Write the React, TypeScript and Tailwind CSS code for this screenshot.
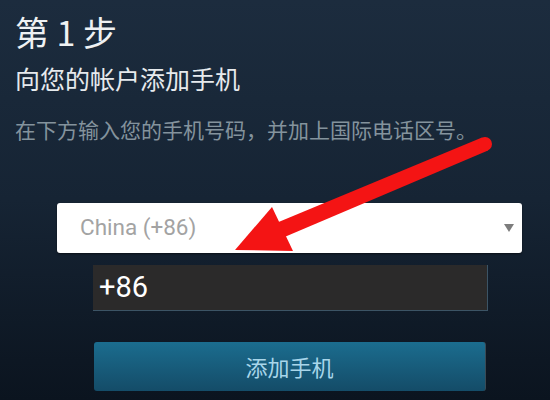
export default function App() {
  return (
    <div className="relative w-[550px] h-[400px] overflow-hidden bg-gradient-to-b from-[#1c2c3e] via-[#162434] to-[#0b141f] font-['Roboto','Noto_Sans_CJK_SC',sans-serif]">
      <div className="flex flex-col pl-[15px] pt-[12px]">
        <h1 className="text-[34px] leading-[40px] text-[#eef1f3] font-['Noto_Sans_CJK_SC',sans-serif]">
          第 1 步
        </h1>
        <h2 className="mt-[11px] text-[25px] leading-[30px] text-[#e6eaed] font-['Noto_Sans_CJK_SC',sans-serif]">
          向您的帐户添加手机
        </h2>
        <p className="mt-[23px] text-[21px] leading-[26px] text-[#84939d] font-['Noto_Sans_CJK_SC',sans-serif]">
          在下方输入您的手机号码，并加上国际电话区号。
        </p>

        <div className="mt-[61px] ml-[42px] flex h-[50px] w-[465px] items-center justify-between rounded-[3px] bg-white pl-[23px] pr-[8px] shadow-[0_1px_2px_rgba(0,0,0,0.5)]">
          <span className="text-[22.5px] text-[#a3a3a3]">China (+86)</span>
          <svg width="10" height="8" viewBox="0 0 10 8">
            <path d="M0 0 L10 0 L5 8 Z" fill="#7d7d7d" />
          </svg>
        </div>

        <div className="mt-[12px] ml-[78px] flex h-[46px] w-[395px] items-center border-r border-b border-[#3c5465] bg-[#2b2a2a] pl-[6px]">
          <span className="text-[29px] text-white">+86</span>
        </div>

        <button className="mt-[31px] ml-[79px] flex h-[49px] w-[392px] items-center justify-center rounded-[3px] border-r border-[#3a4a55] bg-gradient-to-b from-[#1b6d8f] to-[#144c68] text-[22px] text-[#a8d6ea] font-['Noto_Sans_CJK_SC',sans-serif]">
          添加手机
        </button>
      </div>

      {/* red arrow pointing at the country select */}
      <svg className="absolute left-0 top-0" width="550" height="400" viewBox="0 0 550 400">
        <polygon points="482,137.5 488,150.5 281,238.5 275,223.5" fill="#f41414" />
        <circle cx="485" cy="144" r="7" fill="#f41414" />
        <polygon points="235,250 272,207 293,251" fill="#f41414" />
      </svg>
    </div>
  )
}
